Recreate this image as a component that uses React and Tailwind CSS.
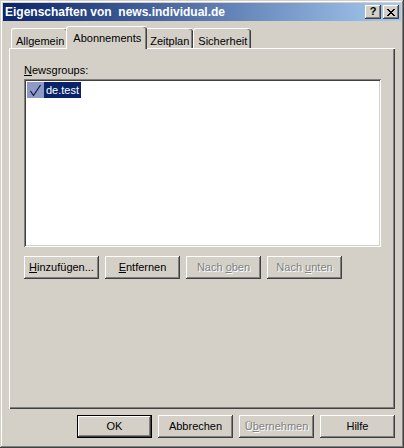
const raised =
  'shadow-[inset_-1px_-1px_#404040,inset_1px_1px_#ffffff,inset_-2px_-2px_#808080,inset_2px_2px_#d4d0c8]'
const sunken =
  'shadow-[inset_1px_1px_#808080,inset_-1px_-1px_#ffffff,inset_2px_2px_#404040,inset_-2px_-2px_#d4d0c8]'

function Btn({ children, disabled, isDefault }) {
  return (
    <div
      className={`w-[75px] h-[23px] flex items-center justify-center text-[11px] bg-[#d4d0c8] ${
        isDefault
          ? 'shadow-[inset_0_0_0_1px_#000000,inset_-2px_-2px_#404040,inset_2px_2px_#ffffff,inset_-3px_-3px_#808080]'
          : raised
      } ${disabled ? 'text-[#808080] [text-shadow:1px_1px_#ffffff]' : 'text-black'}`}
    >
      <span className="whitespace-pre">{children}</span>
    </div>
  )
}

function Tab({ label, active }) {
  if (active) {
    return (
      <div className="relative z-10 -mx-[2px] mb-[-1px] h-[23px] px-[6px] pt-[3px] bg-[#d4d0c8] rounded-t-[3px] border-l border-t border-white shadow-[inset_-1px_0_#404040,inset_-2px_0_#808080] text-[11px] text-black">
        {label}
      </div>
    )
  }
  return (
    <div className="h-[20px] px-[4px] pt-[4px] bg-[#d4d0c8] rounded-t-[3px] border-l border-t border-white shadow-[inset_-1px_0_#404040,inset_-2px_0_#808080] text-[11px] text-black">
      {label}
    </div>
  )
}

export default function App() {
  return (
    <div
      className="w-[404px] h-[448px] bg-[#d4d0c8] p-[3px] flex flex-col shadow-[inset_-1px_-1px_#404040,inset_1px_1px_#d4d0c8,inset_-2px_-2px_#808080,inset_2px_2px_#ffffff]"
      style={{ fontFamily: '"Liberation Sans", Arial, sans-serif' }}
    >
      {/* Title bar */}
      <div className="h-[18px] shrink-0 flex items-center justify-between pl-[2px] pr-[2px] bg-[linear-gradient(to_right,#0a246a,#a6caf0)]">
        <span className="text-white font-bold text-[12px] whitespace-pre">Eigenschaften von  news.individual.de</span>
        <div className="flex gap-[2px]">
          <div className={`w-[16px] h-[14px] ${raised} bg-[#d4d0c8] flex items-center justify-center text-[11px] font-bold text-black leading-none pb-px`}>
            ?
          </div>
          <div className={`w-[16px] h-[14px] ${raised} bg-[#d4d0c8] flex items-center justify-center`}>
            <svg width="8" height="7" viewBox="0 0 8 7" shapeRendering="crispEdges">
              <path d="M0 0h2v1H0zM6 0h2v1H6zM1 1h2v1H1zM5 1h2v1H5zM2 2h4v1H2zM3 3h2v1H3zM2 4h4v1H2zM1 5h2v1H1zM5 5h2v1H5zM0 6h2v1H0zM6 6h2v1H6z" fill="#000" />
            </svg>
          </div>
        </div>
      </div>

      {/* Tabs */}
      <div className="mt-[5px] ml-[8px] flex items-end h-[22px]">
        <Tab label="Allgemein" />
        <Tab label="Abonnements" active />
        <Tab label="Zeitplan" />
        <Tab label="Sicherheit" />
      </div>

      {/* Tab panel */}
      <div className="mx-[6px] h-[361px] border-l border-t border-white shadow-[inset_-1px_-1px_#404040,inset_-2px_-2px_#808080] pl-[14px] pt-[13px]">
        <div className="text-[11px] text-black h-[17px]">
          <span className="underline">N</span>ewsgroups:
        </div>
        <div className={`w-[357px] h-[168px] bg-white ${sunken} p-[3px]`}>
          <div className="flex items-center h-[16px]">
            <div className="w-[17px] h-[16px] bg-[#8d9ac4] flex items-center justify-center">
              <svg width="13" height="13" viewBox="0 0 13 13">
                <path d="M1.5 7 L4.5 11.5 L11.5 1" stroke="#0a1a40" strokeWidth="1.2" fill="none" />
              </svg>
            </div>
            <div className="h-[16px] px-[2px] bg-[#0a246a] text-white text-[11px] flex items-center">de.test</div>
          </div>
        </div>
        <div className="mt-[9px] flex gap-[6px]">
          <Btn>
            <span className="underline">H</span>inzufügen...
          </Btn>
          <Btn>
            <span className="underline">E</span>ntfernen
          </Btn>
          <Btn disabled>
            {'Nach '}<span className="underline">o</span>ben
          </Btn>
          <Btn disabled>
            {'Nach '}<span className="underline">u</span>nten
          </Btn>
        </div>
      </div>

      {/* Footer buttons */}
      <div className="mt-[6px] mr-[6px] flex justify-end gap-[6px]">
        <Btn isDefault>OK</Btn>
        <Btn>Abbrechen</Btn>
        <Btn disabled>
          Ü<span className="underline">b</span>ernehmen
        </Btn>
        <Btn>Hilfe</Btn>
      </div>
    </div>
  )
}
